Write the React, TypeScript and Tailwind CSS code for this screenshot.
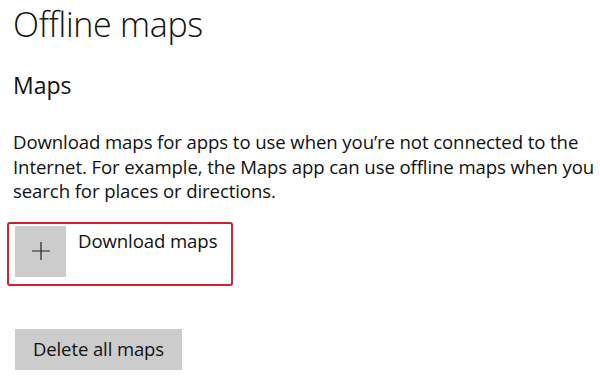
export default function App() {
  return (
    <div className="w-[600px] h-[385px] bg-white text-[#111] font-['Open_Sans','Noto_Sans',sans-serif] overflow-hidden">
      <div className="pl-[13px]">
        <h1 className="text-[34px] font-light leading-[48px] tracking-[-0.3px]">Offline maps</h1>
        <h2 className="mt-[21px] text-[23px] leading-[32px]">Maps</h2>
        <p className="mt-[29px] w-[585px] text-[18.6px] leading-[24.5px] tracking-[-0.1px]">
          Download maps for apps to use when you’re not connected to the Internet. For example, the Maps app can use offline maps when you search for places or directions.
        </p>
      </div>

      <div className="ml-[7px] mt-[18px] w-[226px] h-[64px] border-2 border-[#d3202e] rounded-[3px] flex items-start pl-[6px] pt-[2px]">
        <div className="w-[51px] h-[51px] bg-[#cccccc] flex items-center justify-center">
          <svg width="20" height="20" viewBox="0 0 20 20" fill="none" stroke="#222" strokeWidth="1.2">
            <path d="M10 1v18M1 10h18" />
          </svg>
        </div>
        <span className="ml-[12px] mt-[3px] text-[18.6px] leading-[24px] tracking-[-0.1px]">Download maps</span>
      </div>

      <div className="ml-[15px] mt-[43px] w-[167px] h-[41px] bg-[#cccccc] flex items-center justify-center text-[18.5px] tracking-[-0.1px]">
        Delete all maps
      </div>
    </div>
  );
}
